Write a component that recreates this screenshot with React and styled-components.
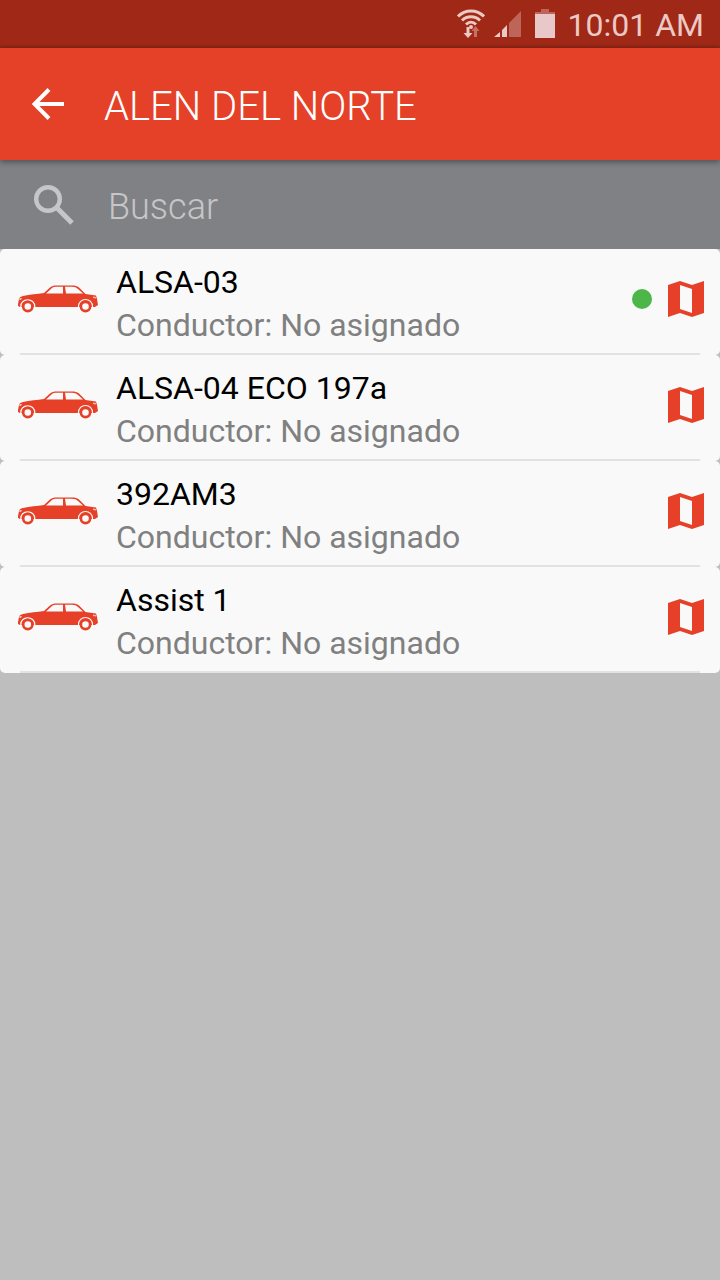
import React, { useState } from "react";
import styled, { createGlobalStyle } from "styled-components";

const vehicles = [
  { id: 1, name: "ALSA-03", driver: "No asignado", online: true },
  { id: 2, name: "ALSA-04 ECO 197a", driver: "No asignado", online: false },
  { id: 3, name: "392AM3", driver: "No asignado", online: false },
  { id: 4, name: "Assist 1", driver: "No asignado", online: false },
];

const WifiIcon = () => (
  <svg width="28" height="30" viewBox="0 0 28 30" fill="none" aria-hidden="true">
    <g stroke="#ecc9c4" strokeWidth="3">
      <path d="M1 7.5C8 0 20 0 27 7.5" />
      <path d="M5 11.5C10 6.500 18 6.500 23 11.5" />
      <path d="M9 15.500C12 12.500 16 12.500 19 15.500" />
    </g>
    <circle cx="14" cy="18" r="2" fill="#ecc9c4" />
    <path d="M9.500 18h3v6h3L11 29l-4.500-5h3z" fill="#ecc9c4" />
    <path d="M17 28v-6h-2.500L18.500 17l4 5H20v6z" fill="#c77064" />
  </svg>
);

const SignalIcon = () => (
  <svg width="32" height="27" viewBox="0 0 32 27" aria-hidden="true">
    <path d="M0 26L6 21V26zM8 19L13 14V26H8z" fill="#ecc9c4" />
    <path d="M15 12L27 0V26H15z" fill="#bd6558" />
  </svg>
);

const BatteryIcon = () => (
  <svg width="24" height="30" viewBox="0 0 24 30" aria-hidden="true">
    <path d="M6 0h8v3h6v3H0V3h6z" fill="#bd6558" />
    <path d="M0 5h20v24H0z" fill="#e8c8c8" />
  </svg>
);

const BackIcon = () => (
  <svg width="32" height="32" viewBox="0 0 32 32" fill="none" aria-hidden="true">
    <path d="M32 16H3M17 1.500L2.500 16L17 30.500" stroke="#fff" strokeWidth="4" />
  </svg>
);

const SearchIcon = () => (
  <svg width="40" height="40" viewBox="0 0 40 40" fill="none" aria-hidden="true">
    <circle cx="14" cy="14" r="11.800" stroke="#c5c6c7" strokeWidth="4.400" />
    <path d="M23.500 23.500L38 38" stroke="#c5c6c7" strokeWidth="5" />
  </svg>
);

const CarIcon = () => (
  <svg width="80" height="28" viewBox="0 0 80 28" aria-hidden="true">
    <path
      d="M0 19L1 14C1.500 12 3 11.500 5 11C12 9.500 19 9 26 8L32 2.500C34 1 36 .5 38 .5H54C57 .5 59 1 61 2.500L67.500 9L78 10.500L79 14L80 20L77 22H2L0 21z"
      fill="#e64128"
    />
    <path d="M28 8.500L34 3C35.500 1.800 37 1.800 38 1.800H45V8.500zM47 1.800H54C57 1.800 58 2.500 60 4L65 8.500H48z" fill="#f9f9f9" />
    <path d="M75 11.500L78 12V13.500L75 13zM1.500 13H4L3 15H1.200z" fill="#f6b8ad" />
    <g fill="none" stroke="#f9f9f9" strokeWidth="1.200">
      <path d="M2.800 22C2 13 17 12 16.800 22M60.500 22C60 12 75 12 74.500 22" />
    </g>
    <g fill="#f9f9f9" stroke="#e64128" strokeWidth="2.600">
      <circle cx="9.800" cy="21.500" r="4.600" />
      <circle cx="67.500" cy="21.500" r="4.600" />
    </g>
  </svg>
);

const MapIcon = () => (
  <svg width="36" height="36" viewBox="0 0 36 36" aria-hidden="true">
    <path
      d="M0 4L12 0L24 4L36 0V32L24 36L12 32L0 36zM12 4V28L24 32V8z"
      fill="#e64128"
      fillRule="evenodd"
    />
  </svg>
);

const VehicleItem = ({ vehicle }) => (
  <Item>
    <ItemContent>
      <CarIcon />
      <ItemText>
        <Name>{vehicle.name}</Name>
        <Driver>Conductor: {vehicle.driver}</Driver>
      </ItemText>
      {vehicle.online && <StatusDot />}
      <IconButton type="button" aria-label={`Ver ${vehicle.name} en el mapa`}>
        <MapIcon />
      </IconButton>
    </ItemContent>
    <Divider />
  </Item>
);

const App = () => {
  const [search, setSearch] = useState("");

  const filtered = vehicles.filter((vehicle) =>
    vehicle.name.toLowerCase().includes(search.toLowerCase())
  );

  return (
    <>
      <GlobalStyle />
      <StatusBar>
        <WifiIcon />
        <SignalIcon />
        <BatteryIcon />
        <Clock>10:01 AM</Clock>
      </StatusBar>
      <Header>
        <IconButton type="button" aria-label="Volver">
          <BackIcon />
        </IconButton>
        <Title>ALEN DEL NORTE</Title>
      </Header>
      <SearchBar>
        <SearchIcon />
        <SearchInput
          value={search}
          onChange={(e) => setSearch(e.target.value)}
          placeholder="Buscar"
          aria-label="Buscar"
        />
      </SearchBar>
      <List>
        {filtered.map((vehicle) => (
          <VehicleItem key={vehicle.id} vehicle={vehicle} />
        ))}
      </List>
    </>
  );
};

export default App;

const GlobalStyle = createGlobalStyle`
  * {
    box-sizing: border-box;
  }
  body {
    margin: 0;
    background-color: #bebebe;
    font-family: Roboto, sans-serif;
  }
`;

const StatusBar = styled.div`
  display: flex;
  align-items: center;
  justify-content: flex-end;
  gap: 9px;
  height: 48px;
  padding: 0 16px;
  background: linear-gradient(#9f2817 44px, #8c2415);
`;

const Clock = styled.time`
  padding-top: 2px;
  font-size: 32px;
  line-height: 46px;
  color: #ecc9c4;
`;

const Header = styled.header`
  position: relative;
  display: flex;
  align-items: center;
  gap: 40px;
  height: 112px;
  padding: 0 32px;
  background-color: #e54128;
  box-shadow: 0 2px 6px rgba(0, 0, 0, 0.4);
`;

const Title = styled.h1`
  margin: 0;
  padding-top: 6px;
  font-size: 40px;
  font-weight: 300;
  line-height: 48px;
  color: #fff;
`;

const IconButton = styled.button`
  display: flex;
  padding: 0;
  border: none;
  background: none;
  cursor: pointer;
`;

const SearchBar = styled.div`
  display: flex;
  align-items: center;
  gap: 34px;
  padding: 20px 34px;
  background-color: #808184;
`;

const SearchInput = styled.input`
  flex: 1;
  min-width: 0;
  height: 49px;
  padding: 4px 0 0;
  border: none;
  outline: none;
  background: none;
  font-family: inherit;
  font-size: 36px;
  font-weight: 300;
  color: #fff;
  &::placeholder {
    color: #c5c6c7;
    opacity: 1;
  }
`;

const List = styled.ul`
  margin: 0;
  padding: 0;
  list-style: none;
`;

const Item = styled.li`
  border-radius: 5px;
  background-color: #f9f9f9;
`;

const ItemContent = styled.div`
  display: flex;
  align-items: center;
  gap: 16px;
  padding: 0 16px 4px 18px;
`;

const ItemText = styled.div`
  flex: 1;
  min-width: 0;
  padding: 12px 0 2px 2px;
`;

const Name = styled.h2`
  margin: 0;
  font-size: 32px;
  font-weight: 400;
  line-height: 43px;
  color: #000;
`;

const Driver = styled.p`
  margin: 0;
  font-size: 32px;
  line-height: 43px;
  color: #808080;
`;

const StatusDot = styled.span`
  width: 20px;
  height: 20px;
  border-radius: 50%;
  background-color: #4cb748;
`;

const Divider = styled.div`
  height: 2px;
  margin: 0 20px;
  background-color: #e2e2e2;
`;
